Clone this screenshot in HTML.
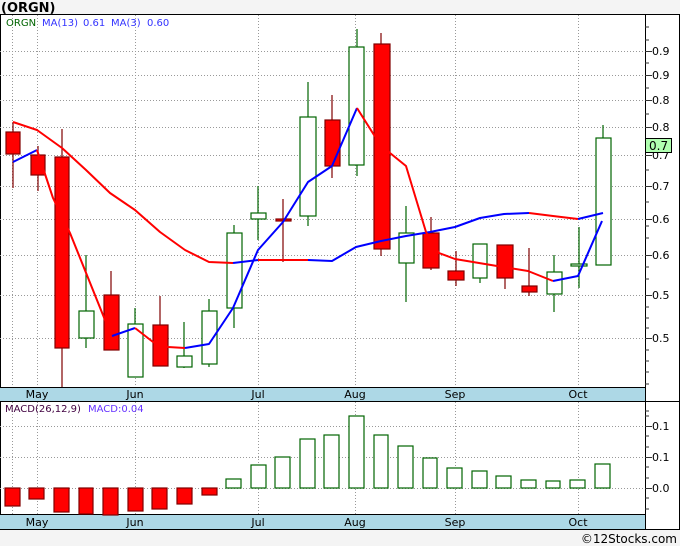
<!DOCTYPE html>
<html><head><meta charset="utf-8"><style>
html,body{margin:0;padding:0;background:#f4f4f4;width:680px;height:546px;overflow:hidden}
svg{display:block;font-family:"DejaVu Sans","Liberation Sans",sans-serif}
</style></head><body>
<svg width="680" height="546" viewBox="0 0 680 546">
<rect x="0" y="0" width="680" height="546" fill="#f4f4f4"/>
<text x="1" y="12" font-size="13" font-weight="bold" fill="#000">(ORGN)</text>
<rect x="0.5" y="14.5" width="679" height="515" fill="#fff" stroke="#000"/>
<g stroke="#999" stroke-dasharray="1,2" stroke-width="1" fill="none">
<path d="M0 51.5H645M0 75.5H645M0 100.5H645M0 127.5H645M0 155.5H645M0 186.5H645M0 219.5H645M0 255.5H645M0 295.5H645M0 338.5H645"/>
<path d="M0 426.5H645M0 457.5H645M0 488.5H645"/>
<path d="M12.5 15V514M37.5 15V514M135.5 15V514M258.5 15V514M355.5 15V514M455.5 15V514M578.5 15V514"/>
</g>
<rect x="0" y="387" width="645" height="14" fill="#add8e6"/>
<path d="M0 387.5H645M0 401.5H680" stroke="#000"/>
<rect x="0" y="514" width="645" height="15" fill="#add8e6"/>
<path d="M0 514.5H645" stroke="#000"/>
<g font-size="11" fill="#000" text-anchor="middle">
<text x="37" y="398">May</text><text x="135" y="398">Jun</text><text x="258" y="398">Jul</text><text x="355" y="398">Aug</text><text x="455" y="398">Sep</text><text x="578" y="398">Oct</text>
<text x="37" y="526">May</text><text x="135" y="526">Jun</text><text x="258" y="526">Jul</text><text x="355" y="526">Aug</text><text x="455" y="526">Sep</text><text x="578" y="526">Oct</text>
</g>
<path d="M645.5 14V530" stroke="#000"/>
<g stroke="#333" stroke-width="1">
<path d="M645 27h4M645 40h4M645 63h4M645 88h4M645 114h4M645 141h4M645 170h4M645 202h4M645 226h4M645 238h4M645 267h4M645 279h4M645 307h4M645 318h4M645 328h4M645 350h4M645 361h4M645 372h4M645 384h4"/>
<path d="M645 51.5h7M645 75.5h7M645 100.5h7M645 127.5h7M645 155.5h7M645 186.5h7M645 219.5h7M645 255.5h7M645 295.5h7M645 338.5h7"/>
<path d="M645 411h4M645 416h4M645 436h4M645 447h4M645 467h4M645 478h4M645 498h4M645 509h4M645 426.5h7M645 457.5h7M645 488.5h7"/>
</g>
<g font-size="11" fill="#000">
<text x="652" y="55">0.9</text><text x="652" y="79">0.9</text><text x="652" y="104">0.8</text><text x="652" y="131">0.8</text><text x="652" y="159">0.7</text><text x="652" y="190">0.7</text><text x="652" y="223">0.6</text><text x="652" y="259">0.6</text><text x="652" y="299">0.5</text><text x="652" y="342">0.5</text>
<text x="652" y="430">0.1</text><text x="652" y="461">0.1</text><text x="652" y="492">0.0</text>
</g>
<rect x="645.5" y="138.5" width="26" height="14" fill="#b0ffb0" stroke="#000"/>
<text x="649" y="150" font-size="12" fill="#000">0.7</text>
<g font-size="10">
<text x="6" y="26" fill="#006400">ORGN</text>
<text x="42" y="26" fill="#3333ff">MA(13)</text>
<text x="83" y="26" fill="#3333ff">0.61</text>
<text x="111" y="26" fill="#3333ff">MA(3)</text>
<text x="147" y="26" fill="#3333ff">0.60</text>
<text x="5" y="412" fill="#400040">MACD(26,12,9)</text>
<text x="88" y="412" fill="#6633ff">MACD:0.04</text>
</g>
<g stroke-width="1.2">
<g stroke="#800000" fill="#ff0000">
<path d="M13 122V188M38 146V191M62 129V387M111 271V350M160 296V366M283 199V262M332 95V178M381 33V256M431 217V270M456 251V286M505 278V289M529 248V296" fill="none"/>
<rect x="6" y="132" width="14" height="22"/><rect x="31" y="155" width="14" height="20"/><rect x="55" y="157" width="14" height="191"/><rect x="104" y="295" width="15" height="55"/><rect x="153" y="325" width="15" height="41"/><rect x="276" y="219" width="15" height="2"/><rect x="325" y="120" width="15" height="46"/><rect x="374" y="44" width="16" height="205"/><rect x="423" y="233" width="16" height="35"/><rect x="448" y="271" width="16" height="9"/><rect x="497" y="245" width="16" height="33"/><rect x="522" y="286" width="15" height="6"/>
</g>
<g stroke="#006400" fill="#fff">
<path d="M86 255V348M135 308V377M184 322V368M209 299V367M234 225V328M258 186V240M308 82V226M357 29V176M406 206V302M480 244V283M554 255V312M579 227V288M603 125V265" fill="none"/>
<rect x="79" y="311" width="15" height="27"/><rect x="128" y="324" width="15" height="53"/><rect x="177" y="356" width="15" height="11"/><rect x="202" y="311" width="15" height="53"/><rect x="227" y="233" width="15" height="75"/><rect x="251" y="213" width="15" height="6"/><rect x="300" y="117" width="16" height="99"/><rect x="349" y="47" width="15" height="118"/><rect x="399" y="233" width="15" height="30"/><rect x="473" y="244" width="14" height="34"/><rect x="547" y="272" width="15" height="22"/><rect x="571" y="264" width="16" height="2"/><rect x="596" y="138" width="15" height="127"/>
</g>
</g>
<g fill="none" stroke-width="2" stroke-linejoin="round">
<polyline stroke="#ff0000" points="13,122 37,130 62,148 86,170 110,193 135,210 160,232 185,250 209,262 233,263"/>
<polyline stroke="#0000ff" points="233,263 258,260"/>
<polyline stroke="#ff0000" points="258,260 283,260 308,260"/>
<polyline stroke="#0000ff" points="308,260 332,261 356,247 381,241 406,236 430,232 455,227 480,218 504,214 529,213"/>
<polyline stroke="#ff0000" points="529,213 553,216 578,219"/>
<polyline stroke="#0000ff" points="578,219 603,213"/>
<polyline stroke="#0000ff" points="13,162 37,150"/>
<polyline stroke="#ff0000" points="37,150 53,198 70,233 105,320 112,336"/>
<polyline stroke="#0000ff" points="112,336 135,328"/>
<polyline stroke="#ff0000" points="135,328 153,342 168,347 185,348"/>
<polyline stroke="#0000ff" points="185,348 209,344 233,308 258,250 283,222 308,182 332,166 357,108"/>
<polyline stroke="#ff0000" points="357,108 374,135 390,153 406,166 426,232 439,253 455,259 497,266 528,271 553,281"/>
<polyline stroke="#0000ff" points="553,281 578,276 602,221"/>
</g>
<g stroke-width="1.2">
<g stroke="#800000" fill="#ff0000">
<rect x="5" y="488" width="15" height="18"/><rect x="29" y="488" width="15" height="11"/><rect x="54" y="488" width="15" height="24"/><rect x="79" y="488" width="14" height="26"/><rect x="103" y="488" width="15" height="27"/><rect x="128" y="488" width="15" height="23"/><rect x="152" y="488" width="15" height="21"/><rect x="177" y="488" width="15" height="16"/><rect x="202" y="488" width="15" height="7"/>
</g>
<g stroke="#006400" fill="#fff">
<rect x="226" y="479" width="15" height="9"/><rect x="251" y="465" width="15" height="23"/><rect x="275" y="457" width="15" height="31"/><rect x="300" y="439" width="15" height="49"/><rect x="324" y="435" width="15" height="53"/><rect x="349" y="416" width="15" height="72"/><rect x="374" y="435" width="14" height="53"/><rect x="398" y="446" width="15" height="42"/><rect x="423" y="458" width="14" height="30"/><rect x="447" y="468" width="15" height="20"/><rect x="472" y="471" width="15" height="17"/><rect x="496" y="476" width="15" height="12"/><rect x="521" y="480" width="15" height="8"/><rect x="546" y="481" width="14" height="7"/><rect x="570" y="480" width="15" height="8"/><rect x="595" y="464" width="15" height="24"/>
</g>
</g>
<text x="677" y="543" font-size="12" fill="#000" text-anchor="end">©12Stocks.com</text>
</svg>
</body></html>
